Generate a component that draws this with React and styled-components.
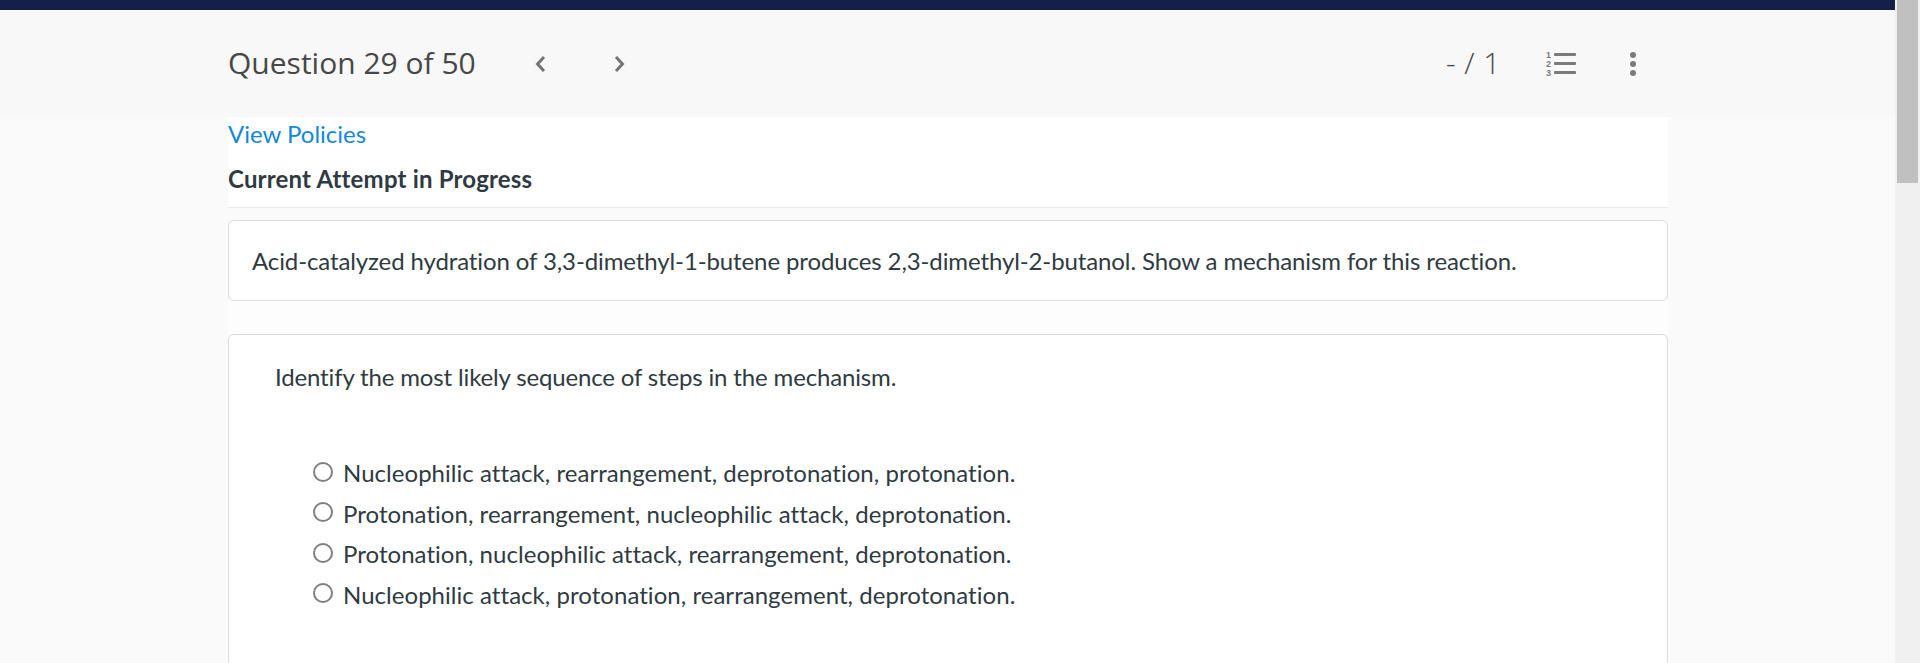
import React from "react";
import styled, { createGlobalStyle } from "styled-components";

const GlobalStyle = createGlobalStyle`
  html, body {
    margin: 0;
    padding: 0;
    height: 100%;
    overflow: hidden;
    background: #fafafa;
  }
  body {
    font-family: "Lato", "Liberation Sans", sans-serif;
    font-variant-ligatures: none;
    color: #2f3a42;
  }
`;

const Shell = styled.div`
  display: flex;
  height: 663px;
  overflow: hidden;
`;

const Page = styled.div`
  flex: 1;
  min-width: 0;
`;

const ScrollTrack = styled.div`
  width: 25px;
  background: #f0f0f0;
  padding: 0 2px 0 2px;
  box-sizing: border-box;
`;

const ScrollThumb = styled.div`
  height: 183px;
  background: #c0c0c0;
`;

const TopStripe = styled.div`
  height: 10px;
  background: #142047;
`;

const Header = styled.header`
  height: 107px;
  background: #f8f8f8;
  display: flex;
  align-items: center;
  padding-left: 228px;
  width: 1440px;
  box-sizing: content-box;
  padding-right: 227px;
`;

const Title = styled.h1`
  margin: 0;
  font: 400 30px "Open Sans", sans-serif;
  color: #474747;
  width: 247px;
  white-space: nowrap;
  position: relative;
  top: -1px;
`;

const NavButton = styled.button`
  border: 0;
  background: none;
  padding: 0;
  width: 16px;
  height: 20px;
  display: flex;
  margin-left: ${(p) => p.$gap}px;
  color: #737373;
`;

const Score = styled.div`
  margin-left: auto;
  font: 300 30px "Open Sans", sans-serif;
  letter-spacing: 0.5px;
  color: #474747;
  white-space: nowrap;
  position: relative;
  top: -1px;
`;

const IconSlot = styled.div`
  display: flex;
  color: #7b7b7b;
  margin-left: ${(p) => p.$gap}px;
  margin-right: ${(p) => p.$end || 0}px;
`;

const Content = styled.main`
  width: 1440px;
  margin-left: 228px;
`;

const Intro = styled.section`
  background: #fff;
  height: 90px;
  border-bottom: 1px solid #ebebeb;
  display: flex;
  flex-direction: column;
`;

const PolicyLink = styled.a`
  color: #1487dc;
  font-size: 24px;
  line-height: 34px;
`;

const AttemptLabel = styled.div`
  font-size: 24px;
  font-weight: 700;
  letter-spacing: 0.18px;
  line-height: 34px;
  margin-top: 11px;
`;

const Card = styled.section`
  background: #fff;
  border: 1px solid #dcdcdc;
  border-radius: 6px;
  box-sizing: border-box;
`;

const PromptCard = styled(Card)`
  height: 81px;
  margin-top: 12px;
  padding: 0 23px;
  display: flex;
  align-items: center;
  font-size: 24px;
  letter-spacing: -0.11px;
`;

const Spacer = styled.div`
  height: 33px;
  background: #fdfdfd;
`;

const QuestionCard = styled(Card)`
  height: 400px;
  padding: 25px 70px 0 46px;
`;

const Instruction = styled.p`
  margin: 0 0 58.5px;
  font-size: 24px;
  letter-spacing: -0.15px;
  line-height: 34px;
`;

const Choices = styled.div`
  padding-left: 38px;
`;

const Choice = styled.label`
  display: flex;
  align-items: center;
  height: 40.5px;
  font-size: 24px;
  letter-spacing: 0.04px;
`;

const Radio = styled.span`
  width: 20px;
  height: 20px;
  border: 2px solid #808080;
  border-radius: 50%;
  box-sizing: border-box;
  background: #fff;
  margin-right: 10px;
  flex: none;
  position: relative;
  top: -1px;
`;

const choices = [
  "Nucleophilic attack, rearrangement, deprotonation, protonation.",
  "Protonation, rearrangement, nucleophilic attack, deprotonation.",
  "Protonation, nucleophilic attack, rearrangement, deprotonation.",
  "Nucleophilic attack, protonation, rearrangement, deprotonation.",
];

function Chevron({ dir }) {
  return (
    <svg width="16" height="20" viewBox="0 0 16 20" fill="none" stroke="currentColor" strokeWidth="3">
      <path d={dir === "left" ? "M11 3 L4.5 10 L11 17" : "M5 3 L11.5 10 L5 17"} />
    </svg>
  );
}

function NumberedList() {
  return (
    <svg width="30" height="26" viewBox="0 0 30 26" fill="currentColor">
      <rect x="8" y="2" width="22" height="3" rx="1" />
      <rect x="8" y="11" width="22" height="3" rx="1" />
      <rect x="8" y="20" width="22" height="3" rx="1" />
      <text x="0" y="7" fontSize="9" fontWeight="700" fontFamily="Liberation Sans">1</text>
      <text x="0" y="16" fontSize="9" fontWeight="700" fontFamily="Liberation Sans">2</text>
      <text x="0" y="25" fontSize="9" fontWeight="700" fontFamily="Liberation Sans">3</text>
    </svg>
  );
}

function MoreDots() {
  return (
    <svg width="6" height="26" viewBox="0 0 6 26" fill="currentColor">
      <circle cx="3" cy="4" r="3" />
      <circle cx="3" cy="13" r="3" />
      <circle cx="3" cy="22" r="3" />
    </svg>
  );
}

export default function App() {
  return (
    <>
      <GlobalStyle />
      <Shell>
        <Page>
          <TopStripe />
          <Header>
            <Title>Question 29 of 50</Title>
            <NavButton $gap={58}><Chevron dir="left" /></NavButton>
            <NavButton $gap={62}><Chevron dir="right" /></NavButton>
            <Score>- / 1</Score>
            <IconSlot $gap={45}><NumberedList /></IconSlot>
            <IconSlot $gap={54} $end={32}><MoreDots /></IconSlot>
          </Header>
          <Content>
            <Intro>
              <PolicyLink>View Policies</PolicyLink>
              <AttemptLabel>Current Attempt in Progress</AttemptLabel>
            </Intro>
            <PromptCard>
              Acid-catalyzed hydration of 3,3-dimethyl-1-butene produces 2,3-dimethyl-2-butanol. Show a mechanism for this reaction.
            </PromptCard>
            <Spacer />
            <QuestionCard>
              <Instruction>Identify the most likely sequence of steps in the mechanism.</Instruction>
              <Choices>
                {choices.map((c) => (
                  <Choice key={c}>
                    <Radio />
                    {c}
                  </Choice>
                ))}
              </Choices>
            </QuestionCard>
          </Content>
        </Page>
        <ScrollTrack><ScrollThumb /></ScrollTrack>
      </Shell>
    </>
  );
}
